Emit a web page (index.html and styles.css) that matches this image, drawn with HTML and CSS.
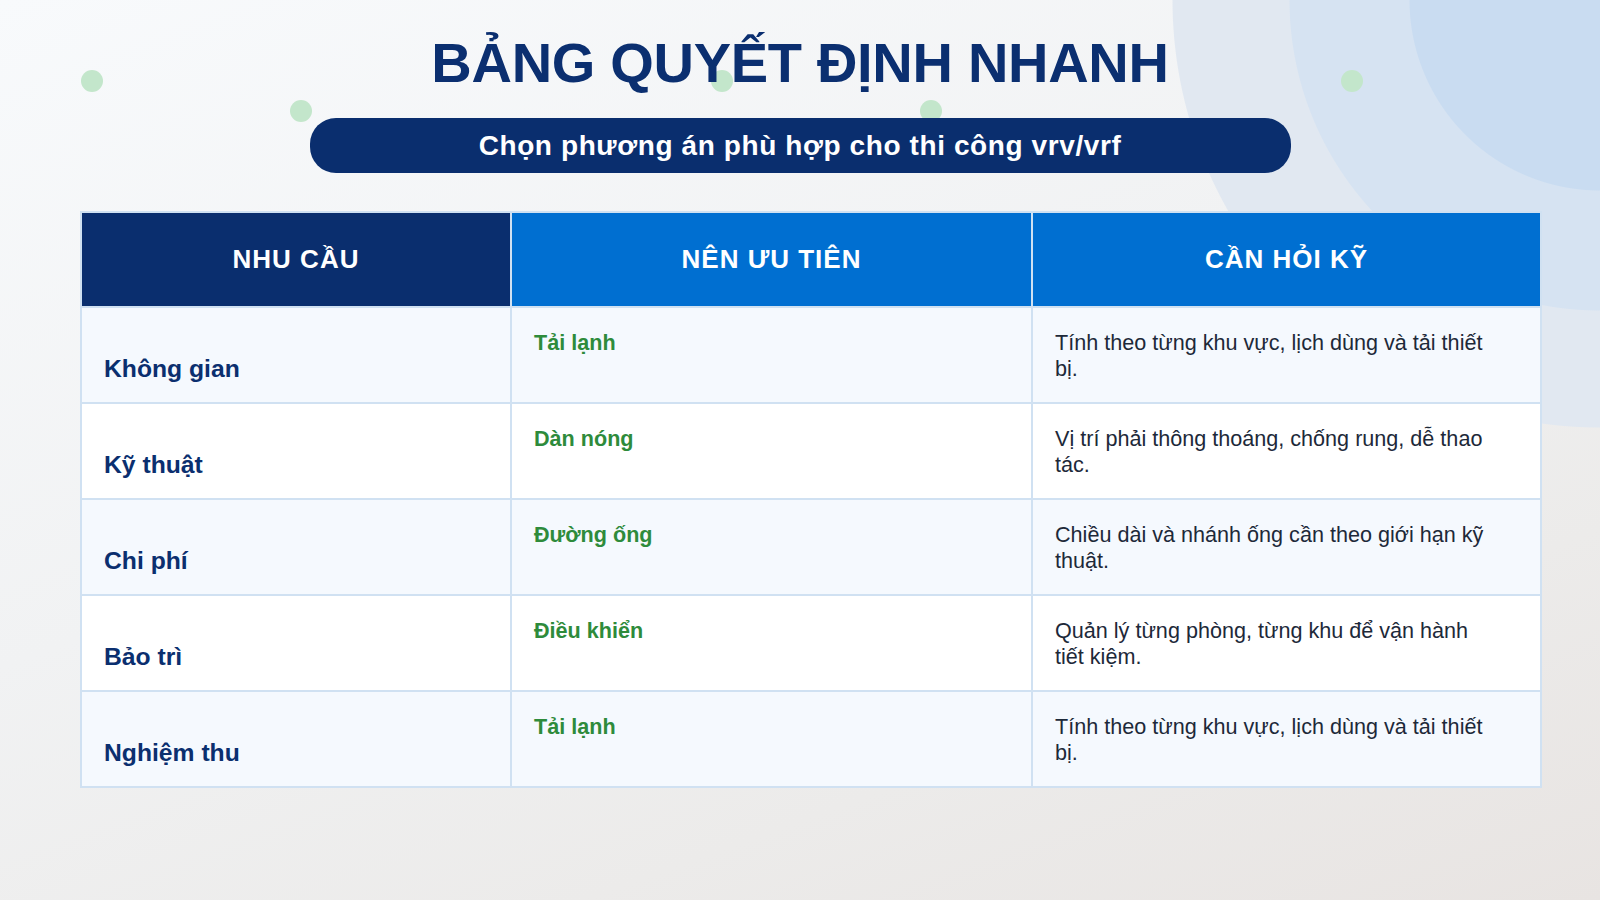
FILE: index.html
```html
<!DOCTYPE html>
<html lang="vi">
<head>
<meta charset="utf-8">
<title>Bảng quyết định nhanh</title>
<link rel="stylesheet" href="styles.css">
</head>
<body>
<div class="slide">
  <div class="dots" aria-hidden="true">
    <span class="dot d1"></span>
    <span class="dot d2"></span>
    <span class="dot d3"></span>
    <span class="dot d4"></span>
    <span class="dot d5"></span>
  </div>
  <header class="head">
    <h1 class="title">BẢNG QUYẾT ĐỊNH NHANH</h1>
    <div class="pill">Chọn phương án phù hợp cho thi công vrv/vrf</div>
  </header>
  <table class="grid">
    <colgroup>
      <col class="c1">
      <col class="c2">
      <col class="c3">
    </colgroup>
    <thead>
      <tr>
        <th class="th-dark">NHU CẦU</th>
        <th class="th-blue">NÊN ƯU TIÊN</th>
        <th class="th-blue">CẦN HỎI KỸ</th>
      </tr>
    </thead>
    <tbody>
      <tr class="alt">
        <td class="need">Không gian</td>
        <td class="prio">Tải lạnh</td>
        <td class="ask">Tính theo từng khu vực, lịch dùng và tải thiết bị.</td>
      </tr>
      <tr>
        <td class="need">Kỹ thuật</td>
        <td class="prio">Dàn nóng</td>
        <td class="ask">Vị trí phải thông thoáng, chống rung, dễ thao tác.</td>
      </tr>
      <tr class="alt">
        <td class="need">Chi phí</td>
        <td class="prio">Đường ống</td>
        <td class="ask">Chiều dài và nhánh ống cần theo giới hạn kỹ thuật.</td>
      </tr>
      <tr>
        <td class="need">Bảo trì</td>
        <td class="prio">Điều khiển</td>
        <td class="ask">Quản lý từng phòng, từng khu để vận hành tiết kiệm.</td>
      </tr>
      <tr class="alt">
        <td class="need">Nghiệm thu</td>
        <td class="prio">Tải lạnh</td>
        <td class="ask">Tính theo từng khu vực, lịch dùng và tải thiết bị.</td>
      </tr>
    </tbody>
  </table>
</div>
</body>
</html>
```

FILE: styles.css
```css
* { box-sizing: border-box; }

html, body {
  margin: 0;
  padding: 0;
  width: 1600px;
  height: 900px;
  overflow: hidden;
}

body {
  font-family: "Liberation Sans", Arial, sans-serif;
  background:
    radial-gradient(circle at 100% 0, #c9dcf1 0 190px, #d6e3f2 191px 310px, #e1e8f1 311px 427px, rgba(225,232,241,0) 428px),
    linear-gradient(160deg, #f8fafc 0%, #f1f2f3 45%, #ecebea 75%, #e8e4e2 100%);
}

.slide {
  position: relative;
  width: 1600px;
  height: 900px;
  padding-top: 29px;
}

.dots {
  position: absolute;
  inset: 0;
  z-index: 0;
  pointer-events: none;
}

.dot {
  position: absolute;
  width: 22px;
  height: 22px;
  border-radius: 50%;
  background: #c3e6cb;
}
.d1 { left: 81px;   top: 70px; }
.d2 { left: 290px;  top: 100px; }
.d3 { left: 711px;  top: 70px; }
.d4 { left: 920px;  top: 100px; }
.d5 { left: 1341px; top: 70px; }

.head {
  position: relative;
  z-index: 1;
  display: flex;
  flex-direction: column;
  align-items: center;
}

.title {
  margin: 0;
  font-size: 56px;
  line-height: 67px;
  font-weight: 700;
  color: #0b2f70;
  letter-spacing: -0.3px;
}

.pill {
  margin-top: 22px;
  width: 981px;
  height: 55px;
  border-radius: 26px;
  background: #0a2e6e;
  color: #ffffff;
  font-size: 28px;
  font-weight: 700;
  letter-spacing: 0.6px;
  display: flex;
  align-items: center;
  justify-content: center;
}

.grid {
  position: relative;
  z-index: 1;
  margin: 38px 0 0 80px;
  width: 1462px;
  table-layout: fixed;
  border-collapse: collapse;
  border: 2px solid #d0e1f2;
}

.c1 { width: 430px; }
.c2 { width: 521px; }

th, td {
  border: 2px solid #d0e1f2;
}

th {
  height: 95px;
  padding: 0;
  color: #ffffff;
  font-size: 26px;
  font-weight: 700;
  letter-spacing: 1px;
  text-align: center;
  vertical-align: middle;
}
.th-dark { background: #0a2e6e; }
.th-blue { background: #006fd1; }

tbody tr { background: #ffffff; }
tbody tr.alt { background: #f5f9fe; }

td {
  height: 96px;
  vertical-align: top;
  line-height: 25.5px;
  padding: 22px 22px 0 22px;
}

.need {
  padding-top: 48px;
  font-size: 24.7px;
  font-weight: 700;
  color: #0b2f6f;
}

.prio {
  font-size: 21.6px;
  font-weight: 700;
  color: #2e8b3b;
}

.ask {
  font-size: 21.6px;
  color: #1d2939;
  padding-right: 48px;
}
```
